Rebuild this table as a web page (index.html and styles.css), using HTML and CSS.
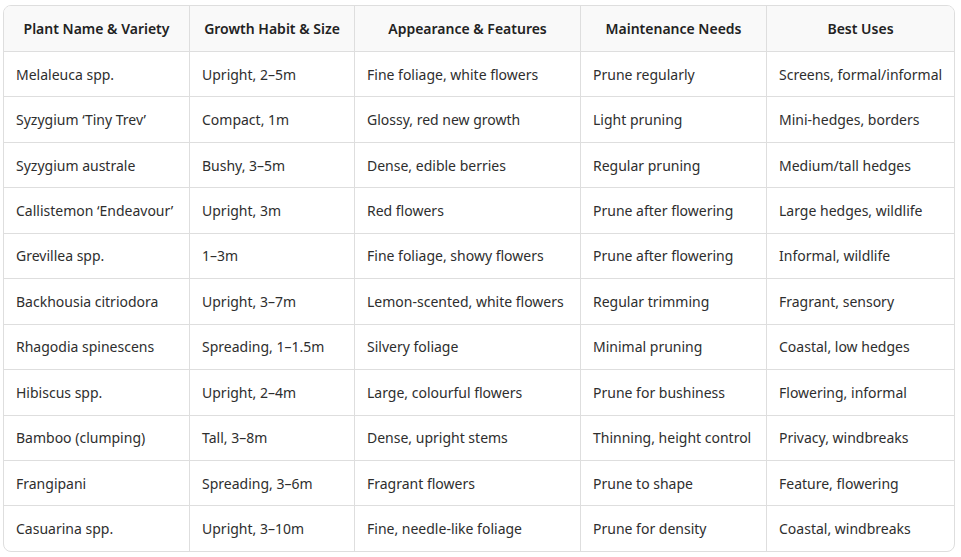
FILE: index.html
```html
<!DOCTYPE html>
<html>
<head>
<meta charset="utf-8">
<link rel="stylesheet" href="styles.css">
</head>
<body>
<div class="wrap">
<table class="plants">
<colgroup>
<col class="c1"><col class="c2"><col class="c3"><col class="c4"><col class="c5">
</colgroup>
<thead>
<tr><th>Plant Name &amp; Variety</th><th>Growth Habit &amp; Size</th><th>Appearance &amp; Features</th><th>Maintenance Needs</th><th>Best Uses</th></tr>
</thead>
<tbody>
<tr><td>Melaleuca spp.</td><td>Upright, 2–5m</td><td>Fine foliage, white flowers</td><td>Prune regularly</td><td>Screens, formal/informal</td></tr>
<tr><td>Syzygium ‘Tiny Trev’</td><td>Compact, 1m</td><td>Glossy, red new growth</td><td>Light pruning</td><td>Mini-hedges, borders</td></tr>
<tr><td>Syzygium australe</td><td>Bushy, 3–5m</td><td>Dense, edible berries</td><td>Regular pruning</td><td>Medium/tall hedges</td></tr>
<tr><td>Callistemon ‘Endeavour’</td><td>Upright, 3m</td><td>Red flowers</td><td>Prune after flowering</td><td>Large hedges, wildlife</td></tr>
<tr><td>Grevillea spp.</td><td>1–3m</td><td>Fine foliage, showy flowers</td><td>Prune after flowering</td><td>Informal, wildlife</td></tr>
<tr><td>Backhousia citriodora</td><td>Upright, 3–7m</td><td>Lemon-scented, white flowers</td><td>Regular trimming</td><td>Fragrant, sensory</td></tr>
<tr><td>Rhagodia spinescens</td><td>Spreading, 1–1.5m</td><td>Silvery foliage</td><td>Minimal pruning</td><td>Coastal, low hedges</td></tr>
<tr><td>Hibiscus spp.</td><td>Upright, 2–4m</td><td>Large, colourful flowers</td><td>Prune for bushiness</td><td>Flowering, informal</td></tr>
<tr><td>Bamboo (clumping)</td><td>Tall, 3–8m</td><td>Dense, upright stems</td><td>Thinning, height control</td><td>Privacy, windbreaks</td></tr>
<tr><td>Frangipani</td><td>Spreading, 3–6m</td><td>Fragrant flowers</td><td>Prune to shape</td><td>Feature, flowering</td></tr>
<tr><td>Casuarina spp.</td><td>Upright, 3–10m</td><td>Fine, needle-like foliage</td><td>Prune for density</td><td>Coastal, windbreaks</td></tr>
</tbody>
</table>
</div>
</body>
</html>
```

FILE: styles.css
```css
html, body {
  margin: 0;
  padding: 0;
  background: #ffffff;
}
body {
  padding: 5px 0 0 3px;
  font-family: "Segoe UI", "Noto Sans", "Open Sans", sans-serif;
  font-size: 14px;
  color: #2e2e2e;
}
.wrap {
  width: 952px;
  box-sizing: border-box;
  border: 1px solid #dedede;
  border-radius: 8px;
  overflow: hidden;
}
.plants {
  width: 100%;
  border-collapse: separate;
  border-spacing: 0;
  table-layout: fixed;
}
.c1 { width: 186px; }
.c2 { width: 165px; }
.c3 { width: 226px; }
.c4 { width: 186px; }
.c5 { width: auto; }
.plants th,
.plants td {
  border-right: 1px solid #dedede;
  border-bottom: 1px solid #dedede;
  padding: 0 12px;
  white-space: nowrap;
  text-align: left;
}
.plants th:last-child,
.plants td:last-child {
  border-right: 0;
}
.plants tbody tr:last-child td {
  border-bottom: 0;
}
.plants th {
  height: 45px;
  background: #f9f9f9;
  font-weight: 600;
  color: #222222;
  text-align: center;
}
.plants td {
  height: 44.45px;
}
```
